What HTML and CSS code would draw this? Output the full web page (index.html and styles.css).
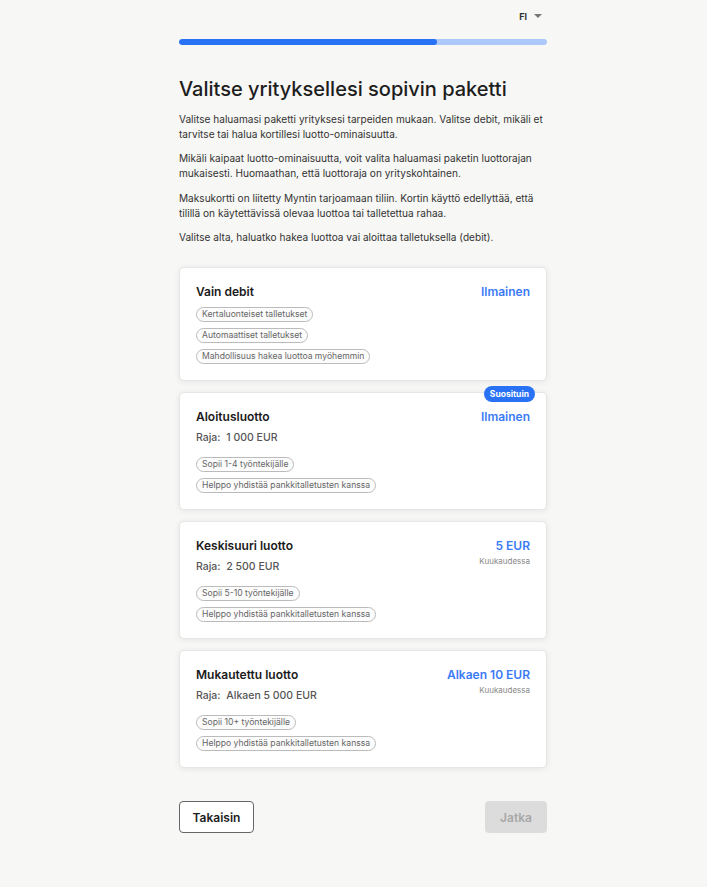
FILE: index.html
```html
<!DOCTYPE html>
<html lang="fi">
<head>
    <meta charset="UTF-8">
    <meta name="viewport" content="width=device-width, initial-scale=1.0">
    <title>Valitse paketti</title>
    <link rel="stylesheet" href="styles.css">
</head>
<body>
    <div class="page">
        <div class="top">
            <div class="lang">FI <span class="caret"></span></div>
        </div>
        <div class="progress">
            <div class="progress-fill"></div>
        </div>

        <h1>Valitse yrityksellesi sopivin paketti</h1>
        <p>Valitse haluamasi paketti yrityksesi tarpeiden mukaan. Valitse debit, mikäli et tarvitse tai halua kortillesi luotto-ominaisuutta.</p>
        <p>Mikäli kaipaat luotto-ominaisuutta, voit valita haluamasi paketin luottorajan mukaisesti. Huomaathan, että luottoraja on yrityskohtainen.</p>
        <p>Maksukortti on liitetty Myntin tarjoamaan tiliin. Kortin käyttö edellyttää, että tilillä on käytettävissä olevaa luottoa tai talletettua rahaa.</p>
        <p>Valitse alta, haluatko hakea luottoa vai aloittaa talletuksella (debit).</p>

        <div class="plans">
            <div class="plan">
                <div class="plan-head">
                    <div class="plan-name">Vain debit</div>
                    <div class="plan-price">
                        <div class="price">Ilmainen</div>
                    </div>
                </div>
                <div class="tags tags-close">
                    <span class="tag">Kertaluonteiset talletukset</span>
                    <span class="tag">Automaattiset talletukset</span>
                    <span class="tag">Mahdollisuus hakea luottoa myöhemmin</span>
                </div>
            </div>

            <div class="plan">
                <span class="badge">Suosituin</span>
                <div class="plan-head">
                    <div>
                        <div class="plan-name">Aloitusluotto</div>
                        <div class="limit"><span class="limit-label">Raja:</span> 1 000 EUR</div>
                    </div>
                    <div class="plan-price">
                        <div class="price">Ilmainen</div>
                    </div>
                </div>
                <div class="tags">
                    <span class="tag">Sopii 1-4 työntekijälle</span>
                    <span class="tag">Helppo yhdistää pankkitalletusten kanssa</span>
                </div>
            </div>

            <div class="plan">
                <div class="plan-head">
                    <div>
                        <div class="plan-name">Keskisuuri luotto</div>
                        <div class="limit"><span class="limit-label">Raja:</span> 2 500 EUR</div>
                    </div>
                    <div class="plan-price">
                        <div class="price">5 EUR</div>
                        <div class="per">Kuukaudessa</div>
                    </div>
                </div>
                <div class="tags">
                    <span class="tag">Sopii 5-10 työntekijälle</span>
                    <span class="tag">Helppo yhdistää pankkitalletusten kanssa</span>
                </div>
            </div>

            <div class="plan">
                <div class="plan-head">
                    <div>
                        <div class="plan-name">Mukautettu luotto</div>
                        <div class="limit"><span class="limit-label">Raja:</span> Alkaen 5 000 EUR</div>
                    </div>
                    <div class="plan-price">
                        <div class="price">Alkaen 10 EUR</div>
                        <div class="per">Kuukaudessa</div>
                    </div>
                </div>
                <div class="tags">
                    <span class="tag">Sopii 10+ työntekijälle</span>
                    <span class="tag">Helppo yhdistää pankkitalletusten kanssa</span>
                </div>
            </div>
        </div>

        <div class="actions">
            <button class="back">Takaisin</button>
            <button class="next" disabled>Jatka</button>
        </div>
    </div>
</body>
</html>
```

FILE: styles.css
```css
* {
    margin: 0;
    padding: 0;
    box-sizing: border-box;
}
body {
    background-color: #f7f7f5;
    font-family: Inter, "Noto Sans", sans-serif;
    color: #2a2a2a;
    padding-left: 19px;
}
.page {
    width: 368px;
    margin: 0 auto;
    padding-bottom: 40px;
}
.top {
    height: 32px;
    display: flex;
    justify-content: flex-end;
    align-items: center;
    padding-right: 5px;
}
.lang {
    display: flex;
    align-items: center;
    gap: 7px;
    font-size: 9px;
    font-weight: 700;
    color: #333;
}
.caret {
    width: 0;
    height: 0;
    border-left: 4px solid transparent;
    border-right: 4px solid transparent;
    border-top: 4px solid #777;
}
.progress {
    margin-top: 7px;
    height: 5.5px;
    border-radius: 3px;
    background-color: #adc8fb;
    overflow: hidden;
}
.progress-fill {
    width: 70%;
    height: 100%;
    border-radius: 3px;
    background-color: #2a72f5;
}
h1 {
    margin-top: 32px;
    font-size: 20px;
    line-height: 24px;
    font-weight: 500;
    color: #1d1d1d;
    margin-bottom: 11px;
}
p {
    font-size: 10.1px;
    line-height: 15px;
    color: #333;
    margin-bottom: 9.5px;
}
.plans {
    margin-top: 22px;
    display: flex;
    flex-direction: column;
    gap: 11px;
}
.plan {
    position: relative;
    background-color: #fff;
    border: 1px solid #e6e6e6;
    border-radius: 5px;
    box-shadow: 0 1px 6px rgba(0, 0, 0, 0.08);
    padding: 15px 16px 16px 16px;
}
.plan-head {
    display: flex;
    justify-content: space-between;
    align-items: flex-start;
}
.plan-name {
    font-size: 12px;
    line-height: 18px;
    font-weight: 600;
    color: #1a1a1a;
}
.limit {
    margin-top: 5px;
    font-size: 10.5px;
    line-height: 14px;
    font-weight: 500;
    color: #555;
}
.limit-label {
    margin-right: 3px;
}
.plan-price {
    text-align: right;
}
.price {
    font-size: 12px;
    line-height: 18px;
    font-weight: 600;
    color: #3b7bf6;
}
.per {
    margin-top: 1px;
    font-size: 8px;
    color: #888;
}
.tags {
    margin-top: 12px;
    display: flex;
    flex-direction: column;
    align-items: flex-start;
    gap: 6px;
}
.tags-close {
    margin-top: 6px;
}
.tag {
    display: inline-block;
    height: 15px;
    line-height: 13px;
    padding: 0 5px;
    border: 1px solid #bbb;
    border-radius: 8px;
    font-size: 8.6px;
    color: #666;
    background-color: #fcfcfc;
}
.badge {
    position: absolute;
    top: -7px;
    right: 11px;
    height: 16px;
    line-height: 16px;
    padding: 0 6px;
    border-radius: 8px;
    background-color: #2a72f5;
    color: #fff;
    font-size: 8.5px;
    font-weight: 700;
}
.actions {
    margin-top: 33px;
    display: flex;
    justify-content: space-between;
}
button {
    font-family: Inter, "Noto Sans", sans-serif;
    font-size: 12px;
    font-weight: 600;
    height: 32px;
    border-radius: 4px;
}
.back {
    width: 75px;
    background-color: #fff;
    color: #1d1d1d;
    border: 1px solid #666;
}
.next {
    width: 62px;
    background-color: #dcdcdc;
    color: #a8a8a8;
    border: none;
}
```
